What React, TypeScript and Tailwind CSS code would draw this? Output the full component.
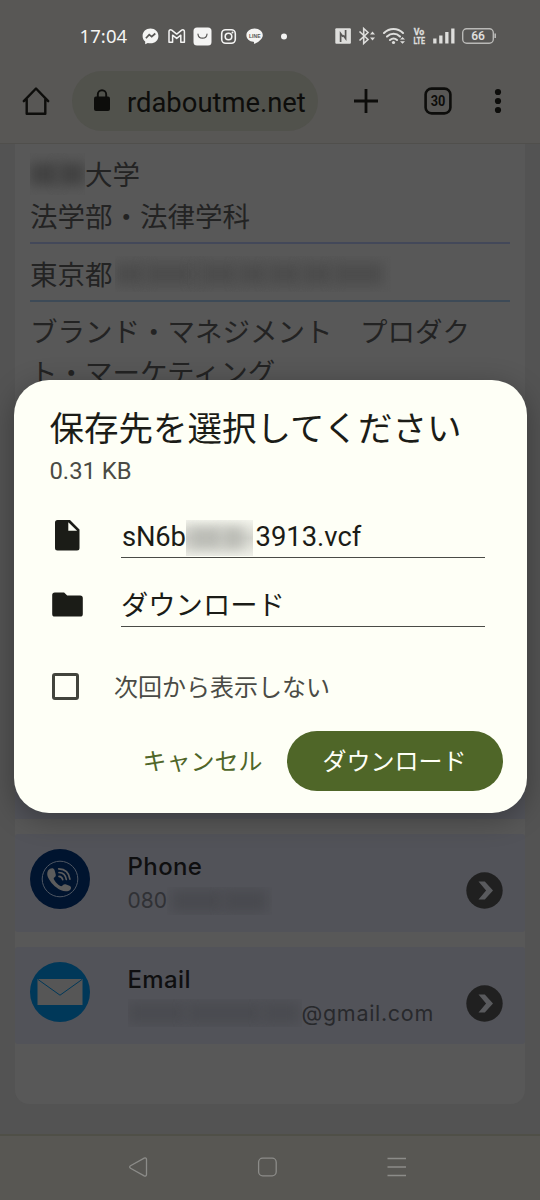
import React from "react";

const StatusIcons: React.FC = () => (
  <svg width="150" height="22" viewBox="142 25 150 22" fill="none">
    {/* messenger */}
    <path d="M150.5 28.5c-4.6 0-7.9 3.2-7.9 7.4 0 2.3 1 4.2 2.6 5.5v2.8l2.6-1.2c.9.2 1.7.3 2.7.3 4.6 0 7.9-3.2 7.9-7.4s-3.3-7.4-7.9-7.4z" fill="#f4f4f3" />
    <path d="M145.9 38.3l3.3-3.6 2.5 2 3.6-3.2" stroke="#585755" strokeWidth="1.7" />
    {/* gmail */}
    <path d="M169 42.2V31.4c0-1.5 1.6-2 2.7-1.2l5 3.9 5-3.9c1.1-.8 2.7-.3 2.7 1.2v10.8h-3.6v-7l-4.1 3.2-4.1-3.2v7z" stroke="#f4f4f3" strokeWidth="1.5" strokeLinejoin="round" />
    {/* shop bag */}
    <rect x="193.5" y="27.5" width="18" height="18" rx="3.5" fill="#f4f4f3" />
    <path d="M198 34.2c.5 5.3 8.5 5.3 9 0" stroke="#585755" strokeWidth="1.2" strokeLinecap="round" />
    {/* instagram */}
    <rect x="221.7" y="29.7" width="13.6" height="13.6" rx="4" stroke="#f4f4f3" strokeWidth="1.6" />
    <circle cx="228.5" cy="36.5" r="3.3" stroke="#f4f4f3" strokeWidth="1.6" />
    <circle cx="232.5" cy="32.6" r="1" fill="#f4f4f3" />
    {/* line */}
    <path d="M254.6 28.5c-4.7 0-8.2 3-8.2 6.7 0 3.4 3 6.2 7 6.6.8.1.7.6.5 2.3 3-1.2 8.9-4.6 8.9-8.9 0-3.7-3.5-6.7-8.2-6.7z" fill="#f4f4f3" />
    <text x="249" y="37.6" fill="#585755" fontSize="5" fontWeight="700" fontFamily="Liberation Sans" textLength="11.5">LINE</text>
    <circle cx="284" cy="36.5" r="3" fill="#f4f4f3" />
  </svg>
);

const SystemIcons: React.FC = () => (
  <svg width="164" height="24" viewBox="334 24 164 24" fill="none">
    {/* nfc */}
    <rect x="335.3" y="28.2" width="15.6" height="15.6" rx="1" fill="#dededc" />
    <path d="M340.600 42V33.500l2.400 3.200M345.600 30v8.500l-2.400-3.200" stroke="#585755" strokeWidth="1.700" />
    {/* bluetooth */}
    <path d="M359.5 31.5l8.5 8-4.3 4V28.5l4.3 4-8.5 8" stroke="#dededc" strokeWidth="1.6" />
    <path d="M370 34.5l2.5-3 2.5 3zM370 37.5l2.5 3 2.5-3z" fill="#dededc" />
    {/* wifi */}
    <path d="M384 33c5.5-5.3 13.5-5.3 19 0M387 36.6c4-3.7 9.3-3.7 13 0M390 40c2.3-1.9 4.9-1.9 7 0" stroke="#dededc" strokeWidth="2.1" strokeLinecap="round" />
    <circle cx="393.5" cy="42.5" r="1.6" fill="#dededc" />
    <path d="M400 39.6l2.5-2.6 2.5 2.6zM400 41.2l2.5 2.6 2.5-2.6z" fill="#dededc" />
    {/* volte */}
    <text x="413.8" y="35.4" fill="#dededc" stroke="#dededc" strokeWidth="0.3" fontSize="9.5" fontWeight="700" fontFamily="Roboto" textLength="10.5" lengthAdjust="spacingAndGlyphs">Vo</text>
    <text x="413.5" y="43.7" fill="#dededc" stroke="#dededc" strokeWidth="0.3" fontSize="9" fontWeight="700" fontFamily="Roboto" textLength="11.5" lengthAdjust="spacingAndGlyphs">LTE</text>
    {/* signal */}
    <path d="M433.2 38.5h3.3v5h-3.300zM439.2 35.5h3.300v8h-3.300zM445.200 32h3.300v11.500h-3.300zM451.200 28.500h3.300v15h-3.300z" fill="#dededc" />
    {/* battery */}
    <rect x="462.7" y="28.7" width="30.6" height="14.6" rx="4" stroke="#b9b9b7" strokeWidth="1.4" />
    <path d="M495.2 33.5v4.5" stroke="#b9b9b7" strokeWidth="1.6" />
    <text x="471.3" y="40.4" fill="#dededc" fontSize="12" fontWeight="600" fontFamily="Roboto" textLength="13.5">66</text>
  </svg>
);

const StatusBar: React.FC = () => (
  <div className="flex h-[71px] shrink-0 items-center pl-[79.5px] pt-[1px] font-['Noto_Sans'] text-[#f4f4f3]">
    <span className="w-[62.5px] text-[18.5px] leading-6 tracking-[0.1px]">17:04</span>
    <StatusIcons />
    <div className="ml-[42px] flex">
      <SystemIcons />
    </div>
  </div>
);

const Toolbar: React.FC = () => (
  <div className="flex h-[73px] shrink-0 items-start border-b border-[#504f4c] text-[#0d0d0b]">
    <div className="flex h-[60px] w-[72px] items-center pl-[22px]">
      <svg width="28" height="30" viewBox="0 0 28 30" fill="none" stroke="currentColor" strokeWidth="2.4" strokeLinejoin="round" strokeLinecap="round">
        <path d="M1.8 15.2L14 2.5l12.2 12.7M4.7 13.5v14.3h18.6V13.5" />
      </svg>
    </div>
    <div className="flex h-[60px] w-[246px] items-center rounded-full bg-[#51524c] pl-[21px]">
      <svg width="18" height="24" viewBox="0 0 18 24">
        <rect x="1" y="7.5" width="16" height="14.5" rx="2" fill="currentColor" />
        <path d="M4.8 8V5.500a4.200 4.200 0 018.400 0V8" fill="none" stroke="currentColor" strokeWidth="1.9" />
      </svg>
      <span className="ml-4 mt-[3px] font-['Roboto'] text-[27.4px] leading-8 whitespace-nowrap">rdaboutme.net</span>
    </div>
    <div className="ml-9 flex h-[60px] items-center">
      <svg width="24" height="24" viewBox="0 0 24 24" stroke="currentColor" strokeWidth="2.8">
        <path d="M0 12h24M12 0v24" />
      </svg>
      <svg className="ml-[46px]" width="28" height="28" viewBox="0 0 28 28">
        <rect x="1.6" y="1.6" width="24.8" height="24.8" rx="6" fill="none" stroke="currentColor" strokeWidth="2.6" />
        <text x="6.7" y="19.3" fill="currentColor" fontSize="15" fontWeight="700" fontFamily="Roboto" textLength="14.6" lengthAdjust="spacingAndGlyphs">30</text>
      </svg>
      <svg className="ml-[42px]" width="8" height="26" viewBox="0 0 8 26" fill="currentColor">
        <circle cx="4" cy="4" r="3.1" />
        <circle cx="4" cy="13" r="3.1" />
        <circle cx="4" cy="22" r="3.1" />
      </svg>
    </div>
  </div>
);

interface RedactedProps {
  className: string;
  blobs: string[];
  tone: string;
}

const Redacted: React.FC<RedactedProps> = ({ className, blobs, tone }) => (
  <span className={`flex shrink-0 items-center overflow-hidden ${className}`}>
    {blobs.map((w, i) => (
      <span key={i} className={`h-[22px] shrink-0 blur-[6px] ${tone} ${w}`} />
    ))}
  </span>
);

const PhoneBadge: React.FC = () => (
  <svg width="60" height="60" viewBox="0 0 60 60" fill="none">
    <circle cx="30" cy="30" r="30" fill="#00142f" />
    <circle cx="30" cy="30" r="17.8" stroke="#4e5662" strokeWidth="1" />
    <path d="M20 19.700c2-1.100 3.900-.5 4.500 1.200l1.200 4.300c.4 1.500-.2 2.600-1.500 3.300-.8.500-.6 1.500.4 3 1.600 2.400 3.100 3.900 5.300 5.200 1.200.7 1.800.5 2.600-.3 1.200-1.200 2.300-1.400 3.700-.9l3.300 1.200c1.800.7 2.100 2.500.8 4-2 2-6 2-9.800.3-5.500-2.600-10.200-7.700-12.400-12.500-1.500-3.500-1-7.200 1.900-8.800z" fill="#5c5c5c" />
    <path d="M29 27.300c2.100.2 3.200 1.200 3.700 3.300M29 23.500c4.100.2 6.700 2.600 7.300 7M28.700 19.900c6.400.3 10.400 4.200 11.200 10.200" stroke="#5c5c5c" strokeWidth="1.700" strokeLinecap="round" />
  </svg>
);

const MailBadge: React.FC = () => (
  <svg width="60" height="60" viewBox="0 0 60 60" fill="none">
    <circle cx="30" cy="30" r="30" fill="#003859" />
    <path d="M7.5 17h45v26h-45z" fill="#565656" />
    <path d="M8 17.5L30 33.2l22-15.7" stroke="#003859" strokeWidth="1" />
  </svg>
);

interface ContactTileProps {
  icon: React.ReactNode;
  title: string;
  children: React.ReactNode;
}

const ContactTile: React.FC<ContactTileProps> = ({ icon, title, children }) => (
  <div className="flex h-[97.5px] items-start rounded-[3px] bg-[#525359] pl-[15px] pt-[15px] font-['Inter']">
    {icon}
    <div className="ml-[37.5px] w-[338px] pt-px">
      <div className="text-[24px] font-medium leading-[34px] tracking-[0.4px] text-[#0f0f10]">{title}</div>
      <div className="flex h-[33px] items-center text-[21px] leading-[33px] text-[#28292c]">{children}</div>
    </div>
    <svg className="mt-[23px]" width="37" height="37" viewBox="0 0 37 37">
      <circle cx="18.5" cy="18.5" r="18.2" fill="#202020" />
      <path d="M12.5 9.5h6.300l8.200 9-8.200 9h-6.300l7.600-9z" fill="#595a5d" />
    </svg>
  </div>
);

const PageContent: React.FC = () => (
  <div className="h-[990px] shrink-0 bg-[#535353] px-[15px] font-['Noto_Sans_CJK_JP',sans-serif]">
    <div className="h-[959.5px] rounded-b-[14px] bg-[#585858]">
      <div className="h-[675px] overflow-hidden px-[15px] text-[27.5px] leading-[41.5px] text-[#232323]">
        <div className="border-b-2 border-[#434859] pt-[9px] pb-[6px]">
          <div className="flex">
            <Redacted className="w-[55px]" blobs={["w-[28px]", "w-[27px]"]} tone="bg-[#424242]" />
            大学
          </div>
          <div>法学部・法律学科</div>
        </div>
        <div className="flex h-[58px] items-center border-b-2 border-[#3d4a57] pt-[3px]">
          東京都
          <Redacted
            className="ml-0.5 h-9 w-[276px]"
            blobs={["w-[30px]", "w-[48px]", "w-[8px]", "w-[36px]", "w-[30px]", "w-[34px]", "w-[32px]", "w-[50px]"]}
            tone="bg-[#4c4c4c]"
          />
        </div>
        <div className="pt-[7.5px] whitespace-nowrap">
          <div>ブランド・マネジメント　プロダク</div>
          <div>ト・マーケティング</div>
        </div>
        <div className="-mx-[15px] mt-[325px] h-[120px] bg-[#525359]" />
      </div>
      <div className="mt-[15px] flex flex-col gap-[15px]">
        <ContactTile icon={<PhoneBadge />} title="Phone">
          <span className="text-[#303135]">080</span>
          <Redacted className="h-7 w-[105px] pl-1" blobs={["w-[52px]", "w-[44px]"]} tone="bg-[#494a4f]" />
        </ContactTile>
        <ContactTile icon={<MailBadge />} title="Email">
          <Redacted
            className="h-7 w-[174px]"
            blobs={["w-[58px]", "w-[76px]", "w-[38px]"]}
            tone="bg-[#4a4b50]"
          />
          <span className="text-[21.5px] tracking-[0.7px]">@gmail.com</span>
        </ContactTile>
      </div>
    </div>
  </div>
);

const NavBar: React.FC = () => (
  <div className="flex flex-1 items-center border-t-2 border-[#4f4f47] bg-[#585753] pb-[2px] pl-[128px]">
    <svg width="280" height="22" viewBox="0 0 280 22" fill="none" stroke="#8c8c89" strokeWidth="1.3">
      <path d="M2.5 9.8L16.2 2.2c1.2-.6 2.3 0 2.3 1.3v15c0 1.3-1.1 1.9-2.3 1.3L2.5 12.2c-1.1-.6-1.1-1.8 0-2.4z" />
      <rect x="130.6" y="2.2" width="17.6" height="17.6" rx="4" />
      <path d="M259.5 2.5h18.5M259.5 11h18.5M259.5 19.5h18.5" strokeWidth="1.7" />
    </svg>
  </div>
);

const DownloadDialog: React.FC = () => (
  <div
    role="dialog"
    className="absolute left-[13.5px] top-[380px] flex h-[432.5px] w-[513px] flex-col rounded-[35px] bg-[#fefff6] font-['Roboto','Noto_Sans_CJK_JP',sans-serif] text-[#1b1c17] shadow-[0_6px_28px_rgba(0,0,0,0.3)]"
  >
    <h1 className="mt-[24px] pl-[36px] text-[34.5px] leading-[50px] whitespace-nowrap">保存先を選択してください</h1>
    <p className="mt-[2px] pl-[36px] text-[23.8px] leading-[30px] text-[#4a4b44]">0.31 KB</p>

    <div className="mt-[29px] flex h-[43px] pl-[38.5px]">
      <svg className="mt-[3px]" width="31" height="34" viewBox="0 0 31 34" fill="currentColor">
        <path fillRule="evenodd" d="M5.5 2H18l9.5 9.5V30a2.5 2.5 0 01-2.5 2.5H5.5A2.5 2.5 0 013 30V4.5A2.5 2.5 0 015.5 2zM16.3 4.3v8.400h8.800z" />
      </svg>
      <div className="ml-[38px] flex w-[363.5px] items-center border-b-[1.5px] border-[#4a4b46] pt-[3px] text-[27.4px]">
        <span className="w-[65px] pl-px tracking-[-0.2px]">sN6b</span>
        <Redacted
          className="mr-[2.5px] h-9 w-[67px] bg-linear-to-b from-[#f4f5ed] via-[#d6d7d0] to-[#f0f1e9]"
          blobs={["w-[4px]", "w-[32px]", "w-[22px]"]}
          tone="bg-[#bbbcb6]"
        />
        <span>3913.vcf</span>
      </div>
    </div>

    <div className="mt-[25px] flex h-[44px] pl-[38.5px]">
      <svg className="mt-[9px]" width="31" height="25" viewBox="0 0 31 25" fill="currentColor">
        <path d="M2.8.5h9.3L15.2 3.5h13a2.6 2.6 0 012.6 2.6v15.8a2.6 2.6 0 01-2.6 2.6H2.8a2.6 2.6 0 01-2.6-2.6V3.1A2.6 2.6 0 012.8.5z" />
      </svg>
      <div className="ml-[38px] w-[363.5px] border-b-[1.5px] border-[#4a4b46] text-[27.3px] leading-[47px]">
        ダウンロード
      </div>
    </div>

    <label className="mt-[41px] flex h-[37px] items-center pl-[38.5px]">
      <span className="h-[27px] w-[27px] rounded-[3px] border-3 border-[#42443c]" />
      <span className="ml-[35px] mt-[3px] text-[24px] leading-[37px] text-[#4a4b45]">次回から表示しない</span>
    </label>

    <div className="mt-[26px] flex h-[60px] justify-end pr-[24px] text-[24px]">
      <button className="mr-[24px] pt-[2px] text-[#4f6628]">キャンセル</button>
      <button className="w-[216px] rounded-full bg-[#4f6628] pt-[2px] text-[#fefff6]">ダウンロード</button>
    </div>
  </div>
);

const App: React.FC = () => {
  return (
    <div className="relative flex h-[1200px] w-[540px] flex-col overflow-hidden bg-[#585755]">
      <StatusBar />
      <Toolbar />
      <PageContent />
      <NavBar />
      <DownloadDialog />
    </div>
  );
};

export default App;
